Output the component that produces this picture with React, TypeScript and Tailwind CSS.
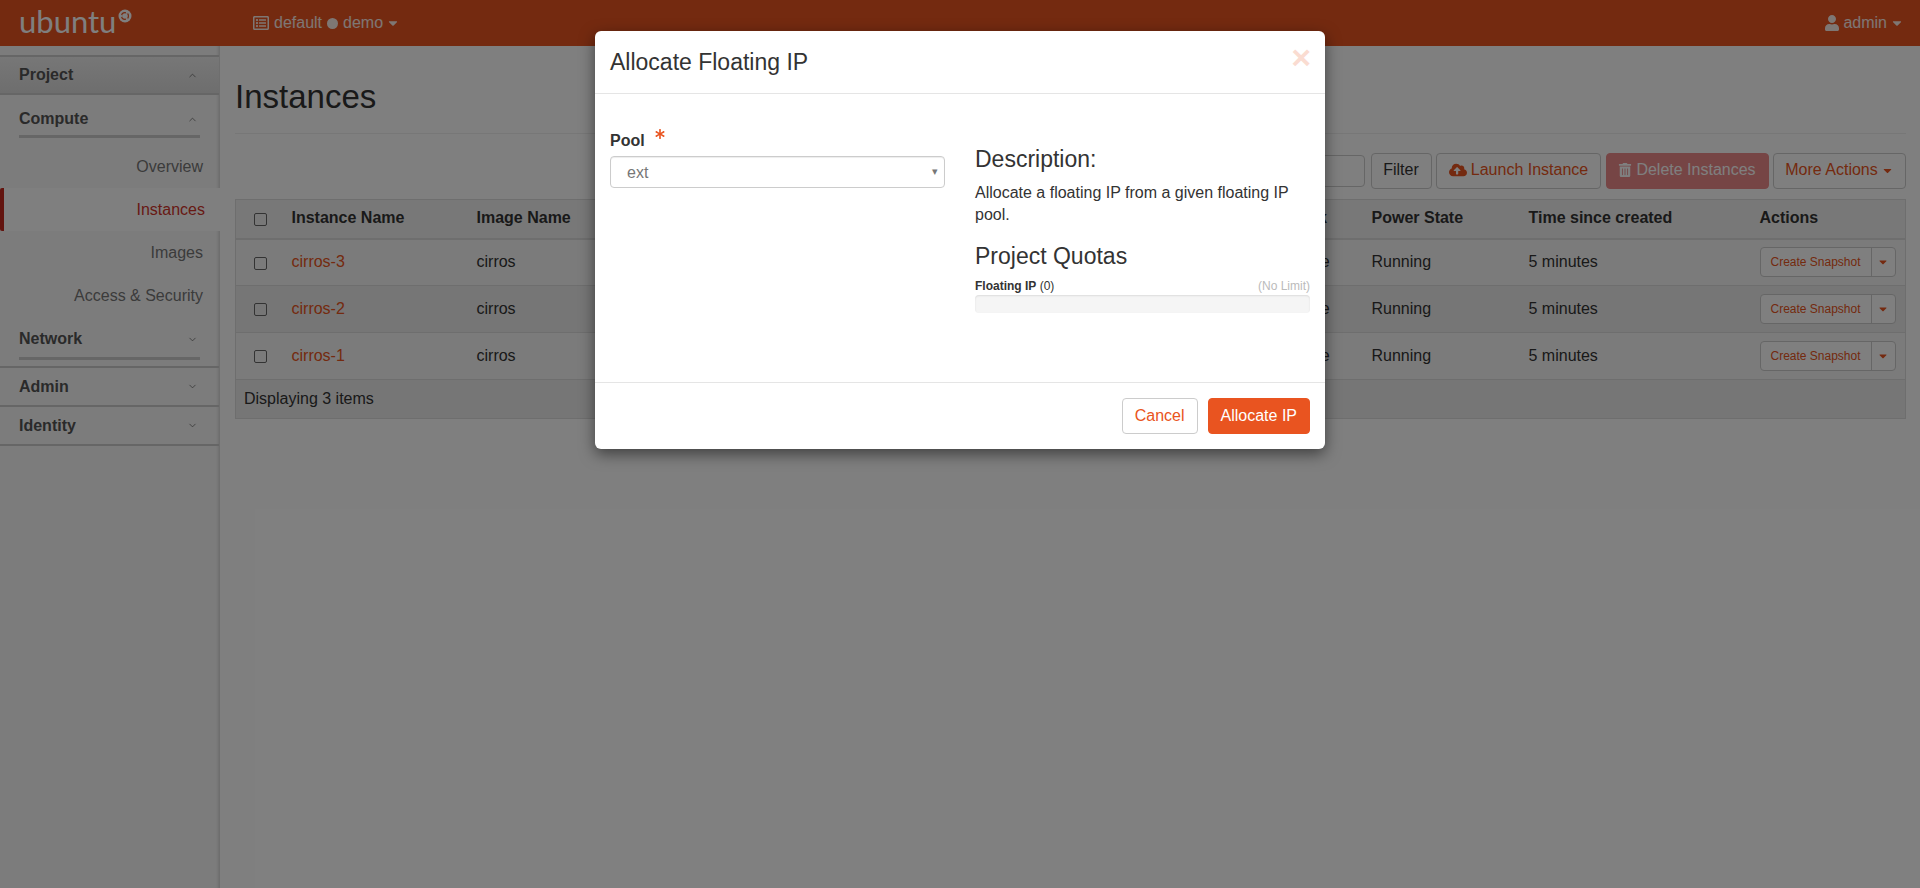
import React from 'react';
import { ChevronDown, ChevronUp } from 'lucide-react';
import { FaAsterisk, FaCaretDown, FaCloudUploadAlt, FaRegListAlt, FaTrashAlt, FaUser } from 'react-icons/fa';

const rows = ['cirros-3', 'cirros-2', 'cirros-1'];

function UbuntuMark() {
  return (
    <svg width="14" height="14" viewBox="0 0 14 14" className="ml-[2px] mt-[-14px]">
      <circle cx="7" cy="7" r="6.5" fill="#fff" />
      <circle cx="7" cy="7" r="3.4" fill="none" stroke="#e95420" strokeWidth="1.2" />
      <circle cx="3.4" cy="7" r="1.1" fill="#fff" />
      <circle cx="8.9" cy="3.8" r="1.1" fill="#fff" />
      <circle cx="8.9" cy="10.2" r="1.1" fill="#fff" />
    </svg>
  );
}

function Topbar() {
  return (
    <header className="h-[46px] bg-[#e95420] flex items-center text-white">
      <div className="w-[253px] pl-[19px] flex items-center">
        <span className="text-[31px] leading-none font-normal font-['Lato',sans-serif] mt-[-3px]">ubuntu</span>
        <UbuntuMark />
      </div>
      <div className="flex items-center text-white/90">
        <FaRegListAlt size={16} />
        <span className="ml-[5px]">default</span>
        <span className="ml-[5px] w-[11px] h-[11px] rounded-full bg-white/90" />
        <span className="ml-[5px]">demo</span>
        <FaCaretDown size={14} className="ml-[3px]" />
      </div>
      <div className="ml-auto pr-[16px] flex items-center text-white/90">
        <FaUser size={16} />
        <span className="ml-[3px]">admin</span>
        <FaCaretDown size={14} className="ml-[3px]" />
      </div>
    </header>
  );
}

function SectionRow({ label, open, shaded }: { label: string; open?: boolean; shaded?: boolean }) {
  const Icon = open ? ChevronUp : ChevronDown;
  return (
    <div className={`${shaded ? 'h-[40px] bg-gradient-to-b from-[#eee] to-[#dcdcdc] border-t-2' : 'h-[39px]'} px-[19px] flex items-center justify-between font-bold text-[#555] border-b-2 border-[#ccc]`}>
      <span>{label}</span>
      <Icon size={11} strokeWidth={1.5} className="mr-[2px]" />
    </div>
  );
}

function UnderlinedRow({ label, open, height, padding }: { label: string; open?: boolean; height: string; padding: string }) {
  const Icon = open ? ChevronUp : ChevronDown;
  return (
    <div className="px-[19px]">
      <div className={`${height} ${padding} flex items-end border-b-[3px] border-[#ccc] font-bold text-[#555] justify-between`}>
        <span>{label}</span>
        <Icon size={11} strokeWidth={1.5} className="mr-[2px] mb-[6px]" />
      </div>
    </div>
  );
}

function NavItem({ label, active }: { label: string; active?: boolean }) {
  if (active) {
    return (
      <div className="h-[43px] flex items-center justify-end pr-[16px] bg-white text-[#d0352a] border-l-4 border-[#c7291e] rounded-l-[2px] w-[221px] relative">
        {label}
      </div>
    );
  }
  return <div className="h-[43px] flex items-center justify-end pr-[16px] text-[#777]">{label}</div>;
}

function Sidebar() {
  return (
    <aside className="w-[220px] shrink-0 pt-[9px] bg-[#f9f9f9] border-r border-[#ddd] shadow-[inset_-3px_0_3px_-2px_rgba(0,0,0,0.12)] min-h-[842px]">
      <SectionRow label="Project" open shaded />
      <UnderlinedRow label="Compute" open height="h-[43px]" padding="pb-[4px]" />
      <div className="pt-[7px]">
        <NavItem label="Overview" />
        <NavItem label="Instances" active />
        <NavItem label="Images" />
        <NavItem label="Access &amp; Security" />
      </div>
      <UnderlinedRow label="Network" height="h-[43px]" padding="pb-[6px]" />
      <div className="h-[8px] border-b-2 border-[#ccc]" />
      <SectionRow label="Admin" />
      <SectionRow label="Identity" />
    </aside>
  );
}

function Toolbar() {
  return (
    <div className="mt-[19px] h-[36px] flex justify-end items-center gap-[4.5px] text-[#e95420]">
      <div className="w-[200px] h-[32px] border border-[#ccc] rounded bg-white mr-[1.5px]" />
      <button className="w-[61px] h-[36px] pb-[2px] border border-[#ccc] rounded bg-white text-[#333]">Filter</button>
      <button className="w-[165px] h-[36px] pb-[2px] border border-[#ccc] rounded bg-white flex items-center justify-center gap-[4px]">
        <FaCloudUploadAlt size={18} />
        Launch Instance
      </button>
      <button className="w-[163px] h-[36px] pb-[2px] border border-[#ec8a8a] rounded bg-[#ec8a8a] text-white flex items-center justify-center gap-[4px]">
        <FaTrashAlt size={14} />
        Delete Instances
      </button>
      <button className="w-[133px] h-[36px] pb-[2px] border border-[#ccc] rounded bg-white flex items-center justify-center gap-[3px]">
        More Actions
        <FaCaretDown size={13} />
      </button>
    </div>
  );
}

function RowCheckbox() {
  return <input type="checkbox" className="appearance-none w-[13px] h-[13px] ml-[1px] align-middle border border-[#666] rounded-[2px]" readOnly />;
}

function InstanceTable() {
  return (
    <table className="mt-[10px] w-[1670px] table-fixed border border-[#ddd] border-collapse text-[#333]">
      <colgroup>
        <col className="w-[48px]" />
        <col className="w-[185px]" />
        <col className="w-[815px]" />
        <col className="w-[80px]" />
        <col className="w-[157px]" />
        <col className="w-[231px]" />
        <col className="w-[154px]" />
      </colgroup>
      <thead>
        <tr className="h-[39px] bg-[#f1f1f1] border-b-2 border-[#ddd]">
          <th className="text-center">
            <RowCheckbox />
          </th>
          <th className="px-2 pb-[2px] text-left font-bold">Instance Name</th>
          <th className="px-2 pb-[2px] text-left font-bold">Image Name</th>
          <th className="px-2 pb-[2px] text-left font-bold">Task</th>
          <th className="px-2 pb-[2px] text-left font-bold">Power State</th>
          <th className="px-2 pb-[2px] text-left font-bold">Time since created</th>
          <th className="px-2 pb-[2px] text-left font-bold">Actions</th>
        </tr>
      </thead>
      <tbody>
        {rows.map((name, i) => (
          <tr key={name} className={`h-[47px] border-b border-[#ddd] ${i === 1 ? 'bg-[#ececec]' : 'bg-[#f7f7f7]'}`}>
            <td className="text-center">
              <RowCheckbox />
            </td>
            <td className="px-2 text-[#e95420]">{name}</td>
            <td className="px-2">cirros</td>
            <td className="px-2">None</td>
            <td className="px-2">Running</td>
            <td className="px-2">5 minutes</td>
            <td className="px-2">
              <div className="flex h-[30px] w-[136px] border border-[#ccc] rounded bg-white text-[#e95420]">
                <span className="w-[111px] flex items-center justify-center text-xs border-r border-[#ccc]">Create Snapshot</span>
                <span className="flex-1 flex items-center justify-center">
                  <FaCaretDown size={12} />
                </span>
              </div>
            </td>
          </tr>
        ))}
        <tr className="h-[39px] bg-[#ececec]">
          <td colSpan={7} className="pl-[8px]">Displaying 3 items</td>
        </tr>
      </tbody>
    </table>
  );
}

function AllocateModal() {
  return (
    <div className="absolute inset-0 bg-black/50 flex justify-center pt-[31px]">
      <div className="w-[730px] h-[418px] bg-white rounded-md shadow-[0_5px_15px_rgba(0,0,0,0.5)] flex flex-col text-[#333]">
        <div className="h-[63px] px-[15px] flex items-center justify-between border-b border-[#e5e5e5]">
          <h4 className="text-[23px] leading-none">Allocate Floating IP</h4>
          <span className="text-[34px] leading-none font-bold text-[#e95420] opacity-20 mt-[-10px] mr-[-1px]">×</span>
        </div>
        <div className="flex-1 px-[15px] pt-[34px] grid grid-cols-2 gap-x-[30px]">
          <div>
            <label className="h-[23px] flex font-bold leading-[23px]">
              <span className="mt-[1px]">Pool</span>
              <FaAsterisk size={10} className="ml-[10px] mt-[1px] text-[#e95420]" />
            </label>
            <div className="mt-[5px] h-[32px] border border-[#ccc] rounded flex items-center justify-between pl-[16px] pr-[6px] pt-[1px] text-[#777] shadow-[inset_0_1px_1px_rgba(0,0,0,0.075)]">
              <span>ext</span>
              <span className="text-[11px] mt-[-3px]">▾</span>
            </div>
          </div>
          <div>
            <h3 className="mt-[19px] text-[23px] leading-[25px]">Description:</h3>
            <p className="mt-[10px] leading-[22px]">Allocate a floating IP from a given floating IP pool.</p>
            <h3 className="mt-[18px] text-[23px] leading-[25px]">Project Quotas</h3>
            <div className="mt-[9px] flex justify-between text-xs leading-[17px]">
              <span>
                <span className="font-bold">Floating IP</span> (0)
              </span>
              <span className="text-[#bbb]">(No Limit)</span>
            </div>
            <div className="h-[18px] bg-[#f5f5f5] rounded shadow-[inset_0_1px_2px_rgba(0,0,0,0.1)]" />
          </div>
        </div>
        <div className="h-[67px] px-[15px] flex items-center justify-end gap-[10px] border-t border-[#e5e5e5]">
          <button className="h-[36px] px-3 border border-[#ccc] rounded text-[#e95420] bg-white">Cancel</button>
          <button className="h-[36px] px-3 border border-[#e95420] rounded text-white bg-[#e95420]">Allocate IP</button>
        </div>
      </div>
    </div>
  );
}

export default function App() {
  return (
    <div className="relative w-[1920px] h-[888px] overflow-hidden bg-white font-['Liberation_Sans',Arial,sans-serif] text-base text-[#333]">
      <Topbar />
      <div className="flex">
        <Sidebar />
        <main className="flex-1 px-[15px] pt-[33px]">
          <h1 className="text-[33px] leading-[36px] pb-[18px] border-b border-[#eee]">Instances</h1>
          <Toolbar />
          <InstanceTable />
        </main>
      </div>
      <AllocateModal />
    </div>
  );
}
